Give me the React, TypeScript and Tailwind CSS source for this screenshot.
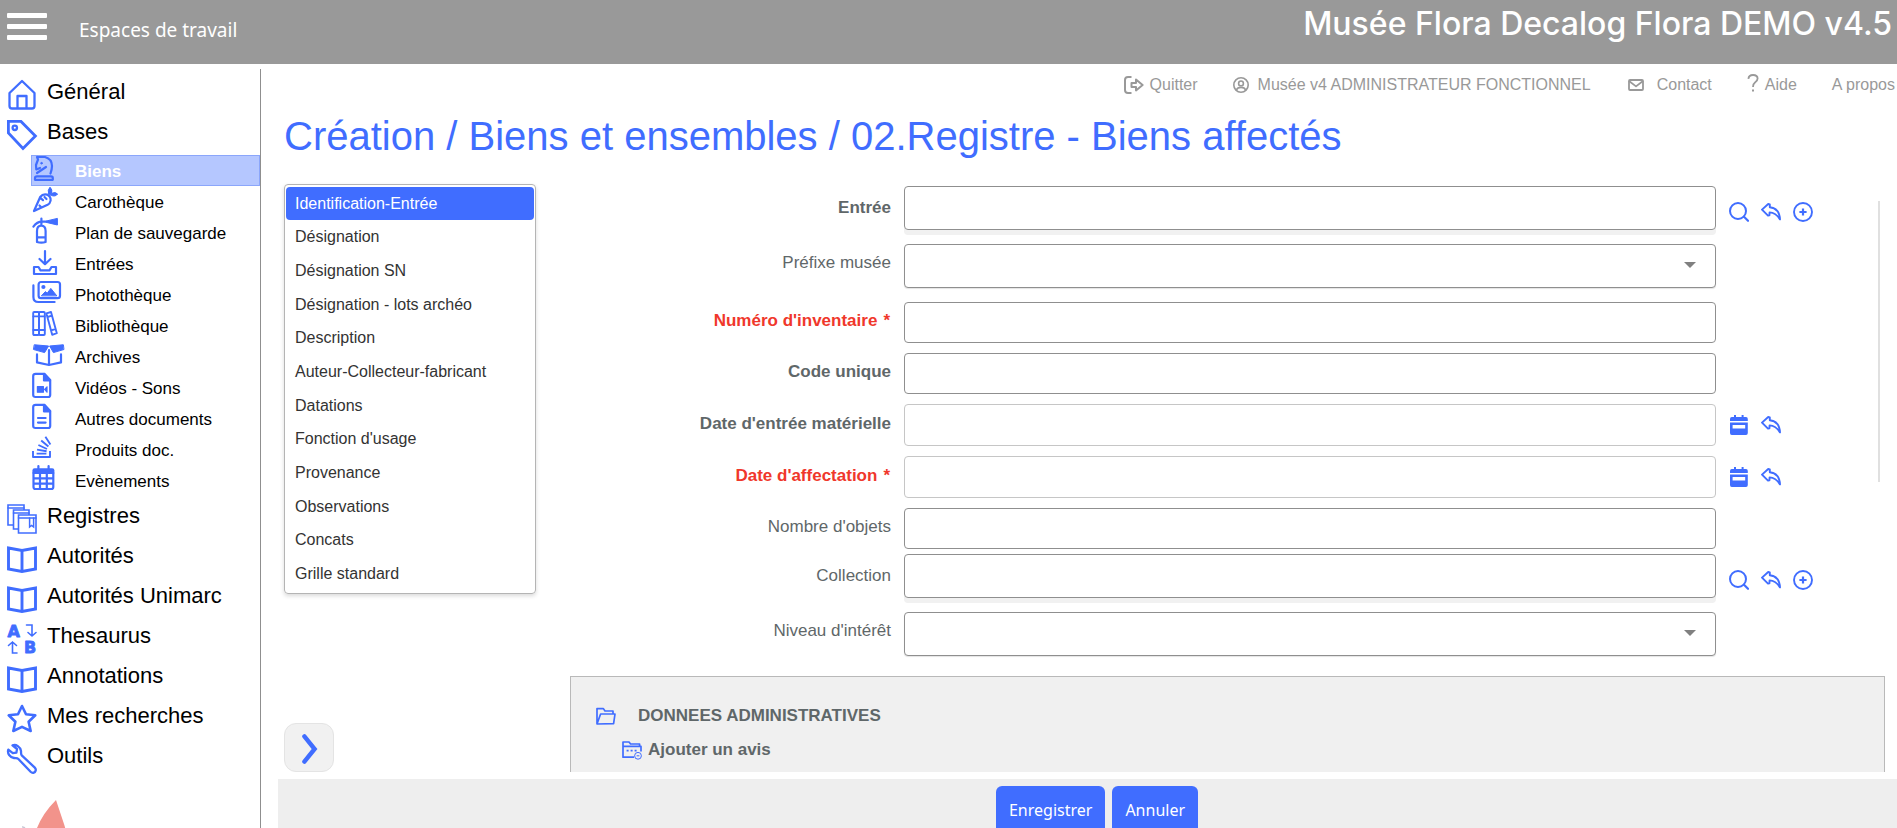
import React from 'react';

type FieldKind = 'search' | 'select' | 'text' | 'date';

interface Field {
    id: string;
    label: string;
    kind: FieldKind;
    bold?: boolean;
    required?: boolean;
    tight?: boolean;
}

const FIELDS: Field[] = [
    { id: 'entree', label: 'Entrée', kind: 'search', bold: true },
    { id: 'prefixe', label: 'Préfixe musée', kind: 'select' },
    { id: 'inventaire', label: "Numéro d'inventaire", kind: 'text', required: true },
    { id: 'code', label: 'Code unique', kind: 'text', bold: true },
    { id: 'date-entree', label: "Date d'entrée matérielle", kind: 'date', bold: true },
    { id: 'date-affectation', label: "Date d'affectation", kind: 'date', required: true },
    { id: 'nombre', label: "Nombre d'objets", kind: 'text', tight: true },
    { id: 'collection', label: 'Collection', kind: 'search' },
    { id: 'niveau', label: "Niveau d'intérêt", kind: 'select' },
];

const TABS = [
    'Identification-Entrée',
    'Désignation',
    'Désignation SN',
    'Désignation - lots archéo',
    'Description',
    'Auteur-Collecteur-fabricant',
    'Datations',
    "Fonction d'usage",
    'Provenance',
    'Observations',
    'Concats',
    'Grille standard',
];

// ---- Sidebar icons (30x30 for sections, 32x28 for bases) ----

const MainIcon = ({ children }: { children: React.ReactNode }) => (
    <svg viewBox="0 0 30 30" className="w-[30px] h-[30px] mt-2 shrink-0 overflow-visible text-[#406dff]" fill="none" stroke="currentColor" strokeWidth="2.3" strokeLinejoin="round" strokeLinecap="round">
        {children}
    </svg>
);

const SubIcon = ({ children }: { children: React.ReactNode }) => (
    <svg viewBox="0 0 32 28" className="w-8 h-7 -mt-px shrink-0 overflow-visible text-[#406dff]" fill="none" stroke="currentColor" strokeWidth="2.2" strokeLinejoin="round" strokeLinecap="round">
        {children}
    </svg>
);

const HomeIcon = () => (
    <MainIcon>
        <path d="M15 1 L2.5 13 V26 Q2.5 28.5 5 28.5 H25 Q27.5 28.5 27.5 26 V13 Z M10.5 28 V16 H19.5 V28" />
    </MainIcon>
);

const TagIcon = () => (
    <MainIcon>
        <path d="M1.4 1.4 H14 L28.4 16 L16 28.4 L1.4 13 Z" strokeWidth="2.8" strokeLinejoin="miter" />
        <circle cx="7.8" cy="7.8" r="2.2" />
    </MainIcon>
);

const RegistersIcon = () => (
    <MainIcon>
        <g strokeWidth="1.6" strokeLinejoin="miter" fill="white">
            <path d="M1 1 H17 V21 H1 Z" />
            <path d="M1 4 H17" />
            <path d="M6.5 6 H22 V25 H6.5 Z" />
            <path d="M6.5 9 H22" />
            <path d="M11.5 11 H29 V29 H11.5 Z" />
            <path d="M11.5 14 H29" />
            <path d="M22.6 14 V23 L24.6 21.4 L26.6 23 V14" fill="none" strokeWidth="1.5" />
        </g>
    </MainIcon>
);

const BookIcon = () => (
    <MainIcon>
        <path d="M1.5 4 L15 6.5 L28.5 4 V25 L15 27.5 L1.5 25 Z M15 6.5 V27" strokeWidth="2.9" strokeLinejoin="miter" />
    </MainIcon>
);

const ThesaurusIcon = () => (
    <MainIcon>
        <g fill="currentColor" stroke="currentColor" strokeWidth="0.8" fontFamily="'DejaVu Sans', sans-serif" fontWeight="700" fontSize="16">
            <text x="0.6" y="12.6">A</text>
            <text x="17" y="29">B</text>
        </g>
        <path d="M19.5 1 H25 V12 M21 8.5 L25 12 L29 8.5 M10 29 H5.5 V18 M1.5 21.5 L5.5 18 L9.5 21.5" strokeWidth="1.6" strokeLinejoin="miter" />
    </MainIcon>
);

const StarIcon = () => (
    <MainIcon>
        <path d="M15 2 L19 10.3 L28.3 11.3 L21.6 17.8 L23.7 27 L15 22.8 L6.3 27 L8.4 17.8 L1.7 11.3 L11 10.3 Z" strokeWidth="2.6" />
    </MainIcon>
);

const WrenchIcon = () => (
    <MainIcon>
        <path d="M5.5 1.4 C9 0 13.5 2.8 14 7 C14.2 9 13.6 10.2 15 11.6 L27.8 23.6 C29.6 25.4 28.8 28.2 26.4 28.8 C25.2 29 24.4 28.6 23.6 27.8 L11.4 15 C10 13.6 9 14.4 7 14 C3 13.4 0 9.4 1.3 5.6 L5.8 9.2 L9.4 8.6 L10 5 Z" />
    </MainIcon>
);

const KnightIcon = () => (
    <SubIcon>
        <path d="M5 2 H13 Q20 4 20 11 Q20 14 18.5 18.5 M5 2 L6 4.5 L4 10 L4.3 14.5 L8 13 M14 12 L5 18 M3 24.8 V23 Q3 21.4 5 21.4 H19 Q20.8 21.4 20.8 23 V24.8 Z" />
        <circle cx="9.5" cy="8.2" r="0.8" fill="currentColor" strokeWidth="1" />
    </SubIcon>
);

const CarrotIcon = () => (
    <SubIcon>
        <path d="M2 25 L8.2 11 Q11 7.4 15 8.6 Q19 10.6 18.6 14.6 Q18 17.6 15.6 18.8 Z M8 11.6 L11 14.2 M14.5 13 L12.5 11 M9 21 L7.5 19.5" />
        <path d="M16.6 8 Q15.2 4 18 1.2 Q20.8 3.6 19.6 7.4 Q23.2 5.4 25.6 8 Q23.6 11 19.6 9.6 Z" fill="currentColor" strokeWidth="1" />
    </SubIcon>
);

const ExtinguisherIcon = () => (
    <SubIcon>
        <path d="M5 25 V14 Q5 8.6 9.2 8.6 Q13.6 8.6 13.6 14 V25 Q9.4 26.4 5 25 Z M5.4 20.4 H13.2 M9.4 1.6 V8 M1.4 9.6 Q5 4.6 10 4.6 H14" />
        <path d="M14.4 4 L25.4 1.4 V8 L14.4 5.4 Z" fill="currentColor" strokeWidth="1" />
    </SubIcon>
);

const InboxIcon = () => (
    <SubIcon>
        <path d="M13 3 V16 M7.5 11 L13 16.2 L18.5 11 M2 26 V19 H6.5 L8.5 22.4 H17.5 L19.5 19 H24 V26 Z" />
    </SubIcon>
);

const PhotosIcon = () => (
    <SubIcon>
        <rect x="6.6" y="3" width="21.4" height="16.2" rx="2.4" />
        <path d="M1.4 6.4 V18 Q1.4 23 6.4 23 H22.6" />
        <circle cx="11.4" cy="8" r="1" fill="currentColor" />
        <path d="M9.6 16.6 L13.4 12.6 L15.2 14.2 L18.8 9.4 L24.6 16.6 Z" fill="currentColor" strokeWidth="1" />
    </SubIcon>
);

const ShelfIcon = () => (
    <SubIcon>
        <g strokeWidth="1.9">
            <rect x="1.2" y="2" width="5.8" height="23" rx="1" />
            <rect x="7" y="2" width="5.8" height="23" rx="1" />
            <path d="M1.4 6.4 H12.6 M1.4 20 H12.6 M14.4 3.4 L19 2 L24.8 23.2 L20.2 24.8 Z M15.4 7 L20 5.6 M19 20.4 L23.6 19" />
        </g>
    </SubIcon>
);

const OpenBoxIcon = () => (
    <SubIcon>
        <path d="M5 13.4 V21.4 L17 24 L29 21.4 V13.4 M17 9 V23.6" />
        <path d="M2.6 3.8 L16.6 5 L12.6 11.6 L1.8 8.6 Z M31 3.8 L17.6 5 L21.4 11.6 L31.6 8.6 Z" fill="currentColor" strokeWidth="1" />
    </SubIcon>
);

const DocShape = () => (
    <>
        <path d="M3.6 1.8 H12.4 L18.2 8 V23 Q18.2 25 16.2 25 H3.4 Q1.2 25 1.2 23 V4 Q1.2 1.8 3.6 1.8 Z" />
        <path d="M12 2 V8.4 H18 Z" fill="currentColor" />
    </>
);

const VideoDocIcon = () => (
    <SubIcon>
        <DocShape />
        <path d="M5.4 14.6 H11.4 V20.2 H5.4 Z M12.6 17.4 L15 14.8 V20.2 Z" fill="currentColor" strokeWidth="1.2" />
    </SubIcon>
);

const TextDocIcon = () => (
    <SubIcon>
        <DocShape />
        <path d="M6 15 H13.6 M6 19.6 H13.6" />
    </SubIcon>
);

const StackIcon = () => (
    <SubIcon>
        <path d="M1 17 V23 H18 V17 M4.6 19.6 H14.4 M5 15.6 L14.6 17.2 M6.4 11 L15 15 M9.2 6.6 L16.4 12.6 M13.4 2.8 L18.4 10.4" strokeWidth="1.9" strokeLinecap="butt" />
    </SubIcon>
);

const CalendarGridIcon = () => (
    <SubIcon>
        <path d="M6.4 1 V4 M16.6 1 V4" />
        <path d="M0.4 8.4 V5.4 Q0.4 3.2 2.6 3.2 H20.2 Q22.4 3.2 22.4 5.4 V8.4 Z" fill="currentColor" stroke="none" />
        <path d="M1.5 8 H21.3 V22 Q21.3 24 19.3 24 H3.5 Q1.5 24 1.5 22 Z M8 8 V24 M14.8 8 V24 M1.6 13.4 H21 M1.6 18.6 H21" />
    </SubIcon>
);

const BASES = [
    { label: 'Biens', Icon: KnightIcon, active: true },
    { label: 'Carothèque', Icon: CarrotIcon },
    { label: 'Plan de sauvegarde', Icon: ExtinguisherIcon },
    { label: 'Entrées', Icon: InboxIcon },
    { label: 'Photothèque', Icon: PhotosIcon },
    { label: 'Bibliothèque', Icon: ShelfIcon },
    { label: 'Archives', Icon: OpenBoxIcon },
    { label: 'Vidéos - Sons', Icon: VideoDocIcon },
    { label: 'Autres documents', Icon: TextDocIcon },
    { label: 'Produits doc.', Icon: StackIcon },
    { label: 'Evènements', Icon: CalendarGridIcon },
];

const SECTIONS = [
    { label: 'Registres', Icon: RegistersIcon },
    { label: 'Autorités', Icon: BookIcon },
    { label: 'Autorités Unimarc', Icon: BookIcon },
    { label: 'Thesaurus', Icon: ThesaurusIcon },
    { label: 'Annotations', Icon: BookIcon },
    { label: 'Mes recherches', Icon: StarIcon },
    { label: 'Outils', Icon: WrenchIcon },
];

const MainLink = ({ label, Icon }: { label: string; Icon: React.FC }) => (
    <a href="#" className="flex h-10 pl-[7px] gap-[10px] text-[22px] leading-10 text-black whitespace-nowrap">
        <Icon />
        {label}
    </a>
);

const Sidebar = () => (
    <nav className="w-[261px] shrink-0 mt-[5px] pt-[3px] border-r border-[#8f8f8f] overflow-hidden">
        <MainLink label="Général" Icon={HomeIcon} />
        <MainLink label="Bases" Icon={TagIcon} />
        <ul className="pt-[3px] pl-[31px]">
            {BASES.map(({ label, Icon, active }) => (
                <li key={label}>
                    <a
                        href="#"
                        className={`flex h-[31px] gap-[11px] border text-[17px] leading-8 whitespace-nowrap ${active ? 'bg-[#b5c7ff] border-[#8ba6fb] text-white font-bold' : 'border-transparent text-black'}`}
                    >
                        <Icon />
                        {label}
                    </a>
                </li>
            ))}
        </ul>
        {SECTIONS.map(({ label, Icon }) => (
            <MainLink key={label} label={label} Icon={Icon} />
        ))}
        {/* top of the lotus logo, the rest is under the fold */}
        <svg viewBox="0 0 80 80" className="w-20 h-20 mt-6 ml-4" fill="#f2938b">
            <path d="M40 0 Q27 13 21 28 Q18 40 24 60 H48 Q52 34 48 24 Z" />
            <path d="M6 26 L9 27 L20 60 L12 60 Z" fill="#c9c9d6" />
        </svg>
    </nav>
);

// ---- Field action icons ----

const SearchButton = () => (
    <button type="button" aria-label="Rechercher">
        <svg viewBox="0 0 20 20" className="w-5 h-5" fill="none" stroke="currentColor" strokeWidth="2" strokeLinecap="round">
            <circle cx="9" cy="9" r="8" />
            <path d="M15 14.8 L19 18.8" strokeWidth="2.2" />
        </svg>
    </button>
);

const UndoButton = () => (
    <button type="button" aria-label="Effacer">
        <svg viewBox="0 0 20 20" className="w-5 h-5" fill="none" stroke="currentColor" strokeWidth="1.9" strokeLinejoin="round">
            <path d="M1 7.6 L7.2 2 L8.8 2.4 V5.2 Q18.4 6.2 19 17.4 Q15 10.8 8.6 10.4 L8.4 13.4 L7 13.6 Z" />
        </svg>
    </button>
);

const AddButton = () => (
    <button type="button" aria-label="Ajouter">
        <svg viewBox="0 0 20 20" className="w-5 h-5" fill="none" stroke="currentColor" strokeWidth="1.9">
            <circle cx="10" cy="10" r="9" />
            <path d="M10 6.4 V13.6 M6.4 10 H13.6" strokeWidth="2.2" />
        </svg>
    </button>
);

const DateButton = () => (
    <button type="button" aria-label="Choisir une date">
        <svg viewBox="0 0 20 20" className="w-5 h-5" fill="currentColor">
            <path d="M5 0 H7 V2 H12.6 V0 H14.6 V2 H17 Q18.8 2 18.8 4 V6 H1 V4 Q1 2 2.8 2 H5 Z" />
            <path d="M1 7.4 H18.8 V18 Q18.8 20 17 20 H2.8 Q1 20 1 18 Z M3.6 10 V13.6 H16.2 V10 Z" fillRule="evenodd" />
        </svg>
    </button>
);

const BOX: Record<FieldKind, string> = {
    search: 'h-11 border-[#8f8f8f] shadow-[0_5px_0_#f1f1f1]',
    select: 'h-11 border-[#8f8f8f] shadow-[0_1px_1px_#e4e4e4]',
    text: 'h-[41px] border-[#8f8f8f]',
    date: 'h-[42px] border-[#c6c6c6]',
};

const LABEL: Record<FieldKind, string> = {
    search: 'pb-0',
    select: 'pb-[6px]',
    text: 'pb-[3px]',
    date: 'pb-[3px]',
};

const FieldRow = ({ field }: { field: Field }) => {
    const { id, label, kind, bold, required, tight } = field;
    const boxClass = `block w-full rounded border bg-white px-3 text-base outline-none ${BOX[kind]}`;
    const gap = kind === 'search' || kind === 'select' ? 'mb-[14px]' : tight ? 'mb-[5px]' : 'mb-[10px]';

    return (
        <div className={`flex items-center ${gap}`}>
            <label
                htmlFor={id}
                className={`w-[321px] shrink-0 text-right text-[17px] leading-5 whitespace-nowrap ${LABEL[kind]} ${required ? 'font-bold text-[#f0372b]' : bold ? 'font-bold text-[#5f6769]' : 'text-[#5f6769]'}`}
            >
                {label}
                {required && <span className="pl-[6px] pr-px">*</span>}
            </label>
            <div className="relative flex-1 ml-[13px]">
                {kind === 'select' ? (
                    <>
                        <select id={id} defaultValue="" className={`appearance-none ${boxClass}`}>
                            <option value=""></option>
                        </select>
                        <svg viewBox="0 0 12 6" className="absolute right-5 top-[18px] w-3 h-[6px] pointer-events-none" fill="#808080">
                            <path d="M0 0 H12 L6 6 Z" />
                        </svg>
                    </>
                ) : (
                    <input id={id} type="text" className={boxClass} />
                )}
            </div>
            <div className={`flex w-[162px] shrink-0 pl-[13px] gap-3 text-[#406dff] ${kind === 'search' ? 'pt-2' : 'pt-0'}`}>
                {kind === 'search' && (
                    <>
                        <SearchButton />
                        <UndoButton />
                        <AddButton />
                    </>
                )}
                {kind === 'date' && (
                    <>
                        <DateButton />
                        <UndoButton />
                    </>
                )}
            </div>
        </div>
    );
};

const TopLinks = () => (
    <div className="flex justify-end items-center h-[42px] pr-[2px] text-base text-[#999] whitespace-nowrap">
        <a href="#" className="flex items-center gap-[6px] mr-[35px]">
            <svg viewBox="0 0 20 18" className="w-5 h-[18px]" fill="none" stroke="currentColor" strokeWidth="2" strokeLinejoin="round">
                <path d="M7.5 1 H4 Q1 1 1 4 V14 Q1 17 4 17 H7.5 M7.5 7 H12 V3.6 L18.6 9 L12 14.4 V11 H7.5 Z" />
            </svg>
            Quitter
        </a>
        <a href="#" className="flex items-center gap-[9px] mr-[37px]">
            <svg viewBox="0 0 16 16" className="w-4 h-4" fill="none" stroke="currentColor" strokeWidth="1.6">
                <circle cx="8" cy="8" r="7.2" />
                <circle cx="8" cy="6.4" r="2.4" />
                <path d="M3.4 13 Q4.4 10.4 8 10.4 Q11.6 10.4 12.6 13" />
            </svg>
            Musée v4 ADMINISTRATEUR FONCTIONNEL
        </a>
        <a href="#" className="flex items-center gap-[13px] mr-[35px]">
            <svg viewBox="0 0 16 12" className="w-4 h-3" fill="none" stroke="currentColor" strokeWidth="1.8" strokeLinejoin="round">
                <rect x="1" y="1" width="14" height="10" rx="1" />
                <path d="M1 2 L8 7.4 L15 2" />
            </svg>
            Contact
        </a>
        <a href="#" className="flex items-center gap-[6px] mr-[35px]">
            <svg viewBox="0 0 12 18" className="w-3 h-[18px] mb-1" fill="none" stroke="currentColor" strokeWidth="1.8">
                <path d="M1.4 4.8 Q1.8 1 6 1 Q10.6 1 10.6 4.6 Q10.6 6.8 8 8.4 Q6 9.8 6 13" />
                <path d="M5 16.6 H7" strokeWidth="2" />
            </svg>
            Aide
        </a>
        <a href="#">A propos</a>
    </div>
);

export default function App() {
    return (
        <div className="flex flex-col h-screen overflow-hidden bg-white font-['Liberation_Sans',Arial,sans-serif]">
            <header className="flex justify-between h-16 shrink-0 bg-[#999] text-white">
                <div className="flex items-center">
                    <button type="button" aria-label="Menu" className="flex flex-col gap-[6px] ml-[7px] mb-3">
                        <span className="w-10 h-[5px] bg-white rounded-[1px]" />
                        <span className="w-10 h-[5px] bg-white rounded-[1px]" />
                        <span className="w-10 h-[5px] bg-white rounded-[1px]" />
                    </button>
                    <a href="#" className="ml-8 mb-1 text-[19px] font-['Noto_Sans',sans-serif]">Espaces de travail</a>
                </div>
                <p className="pr-[5px] text-[32px] leading-[48px] font-medium font-['Inter',sans-serif] whitespace-nowrap">
                    Musée Flora Decalog Flora DEMO v4.5
                </p>
            </header>

            <div className="flex flex-1 min-h-0">
                <Sidebar />

                <main className="flex flex-col flex-1 min-w-0">
                    <TopLinks />
                    <h1 className="pl-[23px] text-[40px] leading-[60px] text-[#406dff] whitespace-nowrap">
                        Création / Biens et ensembles / 02.Registre - Biens affectés
                    </h1>

                    <div className="flex flex-1 min-h-0 pl-[23px] pt-[18px] pr-3">
                        <div className="flex flex-col justify-between w-[252px] shrink-0">
                            <ul className="grid auto-rows-fr h-[410px] px-px py-[2px] border border-[#b4b4b4] rounded shadow-[0_2px_4px_#00000026]">
                                {TABS.map((tab, i) => (
                                    <li key={tab}>
                                        <button
                                            type="button"
                                            className={`w-full h-[33px] pl-[9px] rounded text-left text-base ${i === 0 ? 'bg-[#406dff] text-white' : 'text-[#333]'}`}
                                        >
                                            {tab}
                                        </button>
                                    </li>
                                ))}
                            </ul>
                            <button type="button" aria-label="Suivant" className="flex items-center justify-center w-[50px] h-[49px] rounded-xl border border-[#e4e4e4] bg-[#f1f1f1]">
                                <svg viewBox="0 0 16 30" className="w-4 h-[30px] mt-[2px] ml-[2px]" fill="none" stroke="#406dff" strokeWidth="4.4" strokeLinecap="round">
                                    <path d="M2.4 2.4 L12.6 15 L2.4 27.6" />
                                </svg>
                            </button>
                        </div>

                        <form className="flex-1 min-w-0 ml-[34px] pt-[2px] overflow-hidden" onSubmit={(e) => e.preventDefault()}>
                            <div className="flex">
                                <div className="flex-1 min-w-0">
                                    {FIELDS.map((field) => (
                                        <FieldRow key={field.id} field={field} />
                                    ))}
                                </div>
                                <div className="w-[2px] h-[281px] mt-[15px] mr-[5px] bg-[#e0e0e0]" />
                            </div>
                            <section className="h-[200px] mt-[6px] pl-[25px] pt-[28px] border border-[#b9b9b9] bg-[#f0f0f0] text-[17px] font-bold text-[#5f6769]">
                                <h2 className="flex items-center h-[22px] gap-[22px]">
                                    <svg viewBox="0 0 20 18" className="w-5 h-[18px]" fill="none" stroke="#406dff" strokeWidth="1.7" strokeLinejoin="round">
                                        <path d="M1 17 V1.6 H7.4 L9 4 H17 V7 M1 17 L4.6 7 H19 L17.6 16.6 Z" />
                                    </svg>
                                    DONNEES ADMINISTRATIVES
                                </h2>
                                <a href="#" className="flex items-center h-[22px] gap-[6px] mt-3 ml-[26px]">
                                    <svg viewBox="0 0 20 20" className="w-5 h-5" fill="none" stroke="#406dff" strokeWidth="1.7" strokeLinejoin="round">
                                        <path d="M12 17.2 H1 V2 H7 L8.6 4 H17.6 V6.4 M1 6.4 H19 V11.6" />
                                        <path d="M4.6 10.6 H6.6 M8.6 10.6 H10.6 M12.6 10.6 H14.6" strokeWidth="1.8" />
                                        <circle cx="16" cy="15.8" r="3.4" strokeWidth="1" />
                                        <path d="M14.6 15.8 H17.4" strokeWidth="1" />
                                    </svg>
                                    Ajouter un avis
                                </a>
                            </section>
                        </form>
                    </div>

                    <footer className="flex justify-center h-[49px] shrink-0 mt-[7px] ml-[17px] pl-[19px] pt-[7px] gap-[7px] bg-[#eee] text-base text-white font-['Noto_Sans',sans-serif]">
                        <button type="button" className="h-12 px-[13px] rounded-md bg-[#406dff]">Enregistrer</button>
                        <button type="button" className="h-12 px-[13px] rounded-md bg-[#406dff]">Annuler</button>
                    </footer>
                </main>
            </div>
        </div>
    );
}
